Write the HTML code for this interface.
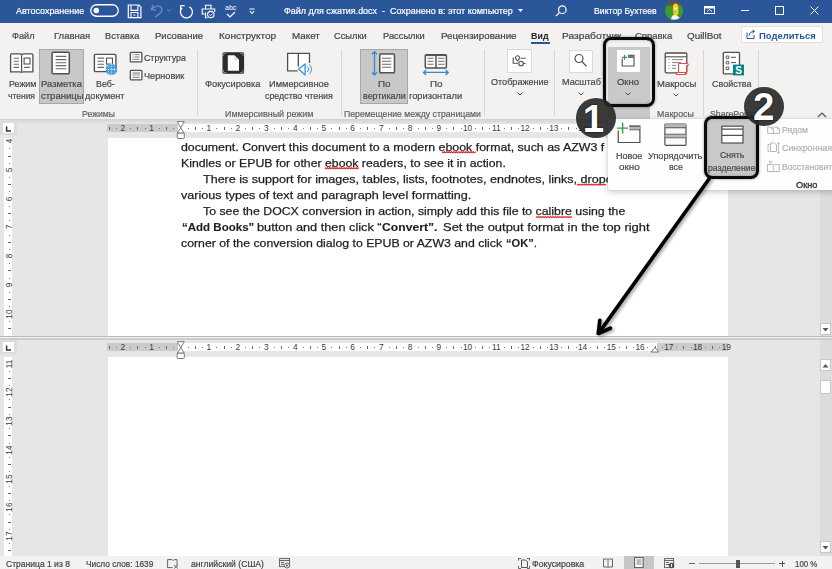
<!DOCTYPE html>
<html><head><meta charset="utf-8"><style>
html,body{margin:0;padding:0;width:832px;height:569px;overflow:hidden;background:#e6e6e6}
body{position:relative;font-family:"Liberation Sans",sans-serif}
.t{position:absolute;white-space:nowrap;transform-origin:0 50%}
.r{position:absolute}
b{font-weight:bold}
</style></head><body>
<div class="r" style="left:0px;top:0px;width:832px;height:23px;background:#2b579a"></div>
<div class="t" style="left:16.0px;top:3.9px;font-size:9.60px;line-height:14px;color:#fff;-webkit-text-stroke:0.2px #fff;transform:scaleX(0.932);">Автосохранение</div>
<svg class="r" style="left:90px;top:4px;" width="29" height="13" viewBox="0 0 29 13"><rect x="0.75" y="0.75" width="27.5" height="11.5" rx="5.75" fill="none" stroke="#fff" stroke-width="1.3"/><circle cx="6.3" cy="6.5" r="2.8" fill="#fff"/></svg>
<svg class="r" style="left:127px;top:4px;" width="15" height="15" viewBox="0 0 15 15"><path d="M1.3 1H12L13.9 2.9V13.6H1.3Z" stroke="#fff" stroke-width="1.2" fill="none"/><path d="M4 1V6.4H10.9V1M4 13.6V8.5H10.9V13.6" stroke="#fff" stroke-width="1.1" fill="none"/><path d="M6.3 11h2.2" stroke="#fff" stroke-width="1"/></svg>
<svg class="r" style="left:149px;top:3px;" width="25" height="16" viewBox="0 0 25 16"><path d="M6 14C12.5 10.5 14.5 6.5 12 4.2S5 3.5 2.6 6.4" stroke="#6f8fc4" stroke-width="1.2" fill="none"/><path d="M4.3 1.8L2.3 6.6L7.2 7.3" stroke="#6f8fc4" stroke-width="1.2" fill="none"/><path d="M18 6.2l2.2 2.1 2.2-2.1" stroke="#6f8fc4" stroke-width="1" fill="none"/></svg>
<svg class="r" style="left:178px;top:3px;" width="17" height="17" viewBox="0 0 17 17"><path d="M11.4 3.7A6 6 0 1 1 4.2 4.7" stroke="#fff" stroke-width="1.25" fill="none"/><path d="M2.6 2.6H6.6M2.6 2.6V6.4" stroke="#fff" stroke-width="1.2" fill="none"/></svg>
<svg class="r" style="left:201px;top:4px;" width="15" height="15" viewBox="0 0 15 15"><path d="M4.5 5V1.3H10V5" stroke="#fff" stroke-width="1.1" fill="none"/><path d="M4.5 10H1.2V5H13.7V8" stroke="#fff" stroke-width="1.1" fill="none"/><path d="M4.5 8.5V13.8H6.5" stroke="#fff" stroke-width="1.1" fill="none"/><circle cx="9.8" cy="10.6" r="3.2" fill="#2b579a" stroke="#fff" stroke-width="1.1"/><path d="M8.3 10.7l1.1 1 1.9-2" stroke="#fff" stroke-width="0.9" fill="none"/></svg>
<div class="t" style="left:225px;top:4px;font-size:7px;line-height:8px;color:#fff">abc</div>
<svg class="r" style="left:226px;top:11px;" width="10" height="7" viewBox="0 0 10 7"><path d="M1 3l3 3 5-5" fill="none" stroke="#fff" stroke-width="1.2"/></svg>
<svg class="r" style="left:249px;top:8px;" width="6" height="7" viewBox="0 0 6 7"><path d="M0.5 1h5M0.8 3l2.2 2.5 2.2-2.5" fill="none" stroke="#fff" stroke-width="1.1"/></svg>
<div class="t" style="left:284.0px;top:4.1px;font-size:9.60px;line-height:14px;color:#fff;-webkit-text-stroke:0.2px #fff;transform:scaleX(0.934);">Файл для сжатия.docx&nbsp; -&nbsp; Сохранено в: этот компьютер</div>
<svg class="r" style="left:518px;top:9px;" width="5" height="4" viewBox="0 0 5 4"><path d="M0 0h5L2.5 3z" fill="#fff"/></svg>
<svg class="r" style="left:555px;top:5px;" width="12" height="12" viewBox="0 0 12 12"><circle cx="7.3" cy="4.7" r="3.8" fill="none" stroke="#fff" stroke-width="1.2"/><path d="M4.6 7.4L1 11" stroke="#fff" stroke-width="1.3"/></svg>
<div class="t" style="left:593.5px;top:4.4px;font-size:9.60px;line-height:14px;color:#fff;-webkit-text-stroke:0.2px #fff;transform:scaleX(0.905);">Виктор Бухтеев</div>
<svg class="r" style="left:664px;top:1px;" width="20" height="20" viewBox="0 0 20 20"><defs><clipPath id="av"><circle cx="10" cy="9.7" r="9.1"/></clipPath></defs><g clip-path="url(#av)"><rect x="0" y="0" width="20" height="20" fill="#3d9a2c"/><rect x="0" y="0" width="20" height="4.5" fill="#7a4a22"/><path d="M7 20c0-3.5 1-6 3.6-6.2S15.5 16 16 20z" fill="#f2f2f2"/><path d="M9 5.5c0-2 1.2-3 2.6-3s2.8 1 2.8 3v6.5c0 1.5-1 2.5-2.6 2.5s-2.8-1.4-2.8-3z" fill="#f2cf2e"/><circle cx="11.7" cy="7.4" r="1.1" fill="#fff"/><path d="M8.5 9.5c0.8 1.2 2 1.8 3.2 1.5" stroke="#b08a2a" stroke-width="0.8" fill="none"/><path d="M14.5 17l2-1.5 1 2.5-2 1z" fill="#f2cf2e"/></g></svg>
<svg class="r" style="left:704px;top:6px;" width="11" height="8" viewBox="0 0 11 8"><rect x="0.5" y="0.5" width="10" height="7" fill="none" stroke="#fff" stroke-width="1"/><rect x="0.5" y="0.5" width="10" height="2" fill="#fff"/><path d="M3 5.5l2.5-2 2.5 2" fill="none" stroke="#fff" stroke-width="0.9"/></svg>
<div class="r" style="left:741px;top:9.5px;width:7.5px;height:1px;background:#fff"></div>
<svg class="r" style="left:775px;top:6px;" width="9" height="9" viewBox="0 0 9 9"><rect x="0.5" y="0.5" width="8" height="8" fill="none" stroke="#fff" stroke-width="1"/></svg>
<svg class="r" style="left:810px;top:6px;" width="9" height="9" viewBox="0 0 9 9"><path d="M0.5 0.5l8 8M8.5 0.5l-8 8" stroke="#fff" stroke-width="1"/></svg>
<div class="r" style="left:0px;top:23px;width:832px;height:96px;background:#f3f2f1"></div>
<div class="t" style="left:11.8px;top:28.9px;font-size:9.60px;line-height:14px;color:#444;-webkit-text-stroke:0.2px #444;transform:scaleX(0.953);">Файл</div>
<div class="t" style="left:53.9px;top:28.9px;font-size:9.60px;line-height:14px;color:#444;-webkit-text-stroke:0.2px #444;transform:scaleX(0.993);">Главная</div>
<div class="t" style="left:105.4px;top:28.9px;font-size:9.60px;line-height:14px;color:#444;-webkit-text-stroke:0.2px #444;transform:scaleX(0.961);">Вставка</div>
<div class="t" style="left:154.9px;top:28.9px;font-size:9.60px;line-height:14px;color:#444;-webkit-text-stroke:0.2px #444;transform:scaleX(0.995);">Рисование</div>
<div class="t" style="left:218.9px;top:28.9px;font-size:9.60px;line-height:14px;color:#444;-webkit-text-stroke:0.2px #444;transform:scaleX(1.043);">Конструктор</div>
<div class="t" style="left:291.6px;top:28.9px;font-size:9.60px;line-height:14px;color:#444;-webkit-text-stroke:0.2px #444;transform:scaleX(1.027);">Макет</div>
<div class="t" style="left:333.8px;top:28.9px;font-size:9.60px;line-height:14px;color:#444;-webkit-text-stroke:0.2px #444;transform:scaleX(0.968);">Ссылки</div>
<div class="t" style="left:383.3px;top:28.9px;font-size:9.60px;line-height:14px;color:#444;-webkit-text-stroke:0.2px #444;transform:scaleX(0.970);">Рассылки</div>
<div class="t" style="left:440.8px;top:28.9px;font-size:9.60px;line-height:14px;color:#444;-webkit-text-stroke:0.2px #444;transform:scaleX(1.020);">Рецензирование</div>
<div class="t" style="left:561.9px;top:28.9px;font-size:9.60px;line-height:14px;color:#444;-webkit-text-stroke:0.2px #444;transform:scaleX(1.065);">Разработчик</div>
<div class="t" style="left:634.7px;top:28.9px;font-size:9.60px;line-height:14px;color:#444;-webkit-text-stroke:0.2px #444;transform:scaleX(0.990);">Справка</div>
<div class="t" style="left:687.3px;top:28.9px;font-size:9.60px;line-height:14px;color:#444;-webkit-text-stroke:0.2px #444;transform:scaleX(1.029);">QuillBot</div>
<div class="t" style="left:531.4px;top:28.9px;font-size:9.60px;line-height:14px;color:#262626;font-weight:bold;transform:scaleX(0.930);">Вид</div>
<div class="r" style="left:531px;top:42px;width:19px;height:2px;background:#2b579a"></div>
<div class="r" style="left:741px;top:26px;width:82px;height:17px;background:#fff;border:1px solid #e1dfdd;box-sizing:border-box;border-radius:2px"></div>
<svg class="r" style="left:746px;top:29px;" width="9" height="10" viewBox="0 0 9 10"><path d="M1 3.5v6h7V6" fill="none" stroke="#2b579a" stroke-width="1"/><path d="M3 7c0-3 2-4.5 5-4.5M6.5 0.8l2 1.7-2 1.7" fill="none" stroke="#2b579a" stroke-width="1"/></svg>
<div class="t" style="left:758.5px;top:28.6px;font-size:9.60px;line-height:14px;color:#2b579a;font-weight:bold;transform:scaleX(0.988);">Поделиться</div>
<div class="r" style="left:0px;top:119px;width:832px;height:1px;background:#d2d2d2"></div>
<div class="r" style="left:197px;top:50px;width:1px;height:66px;background:#d6d6d6"></div>
<div class="r" style="left:341px;top:50px;width:1px;height:66px;background:#d6d6d6"></div>
<div class="r" style="left:484px;top:50px;width:1px;height:66px;background:#d6d6d6"></div>
<div class="r" style="left:554px;top:50px;width:1px;height:66px;background:#d6d6d6"></div>
<div class="r" style="left:648px;top:50px;width:1px;height:66px;background:#d6d6d6"></div>
<div class="r" style="left:703px;top:50px;width:1px;height:66px;background:#d6d6d6"></div>
<div class="r" style="left:758px;top:50px;width:1px;height:66px;background:#d6d6d6"></div>
<div class="r" style="left:39px;top:49px;width:45px;height:55px;background:#cac8c6;border:1px solid #a9a7a5;box-sizing:border-box"></div>
<div class="r" style="left:360px;top:49px;width:48px;height:55px;background:#cac8c6;border:1px solid #a9a7a5;box-sizing:border-box"></div>
<svg class="r" style="left:9px;top:52px;" width="26" height="22" viewBox="0 0 26 22"><path d="M1.6 2.9Q1.6 1.9 2.6 1.9H10.5Q12.6 1.9 12.6 3.5Q12.6 1.9 14.7 1.9H22.9Q23.9 1.9 23.9 2.9V19.8H14.5Q12.6 19.8 12.6 20.8Q12.6 19.8 10.7 19.8H1.6Z" fill="#fff" stroke="#505050" stroke-width="1.3"/><path d="M12.6 3.5V20.3" stroke="#505050" stroke-width="1.2"/><path d="M4.6 6.3h5.4M4.6 9.2h5.4M4.6 12.3h5.4M4.6 15.4h5.4M15.1 15.4h5.9" stroke="#6a6a6a" stroke-width="1.1"/><rect x="15.1" y="6.1" width="5.9" height="5.9" fill="none" stroke="#505050" stroke-width="1.1"/></svg>
<div class="t" style="left:8.5px;top:77.1px;font-size:9.60px;line-height:14px;color:#474747;-webkit-text-stroke:0.2px #474747;transform:scaleX(0.929);">Режим</div>
<div class="t" style="left:8.0px;top:89.1px;font-size:9.60px;line-height:14px;color:#474747;-webkit-text-stroke:0.2px #474747;transform:scaleX(0.885);">чтения</div>
<svg class="r" style="left:50px;top:51px;" width="22" height="24" viewBox="0 0 22 24"><rect x="2.1" y="1.2" width="17.2" height="21.5" rx="1" fill="#fff" stroke="#505050" stroke-width="1.5"/><path d="M5.6 5.4h10.6M5.6 8.6h10.6M5.6 11.7h10.6M5.6 14.6h10.6M5.6 17.8h10.6" stroke="#6a6a6a" stroke-width="1.1"/></svg>
<div class="t" style="left:41.0px;top:77.1px;font-size:9.60px;line-height:14px;color:#474747;-webkit-text-stroke:0.2px #474747;transform:scaleX(0.988);">Разметка</div>
<div class="t" style="left:40.5px;top:89.1px;font-size:9.60px;line-height:14px;color:#474747;-webkit-text-stroke:0.2px #474747;transform:scaleX(0.990);">страницы</div>
<svg class="r" style="left:93px;top:53px;" width="25" height="24" viewBox="0 0 25 24"><rect x="1.4" y="1.4" width="21.5" height="17.2" rx="1" fill="#fff" stroke="#505050" stroke-width="1.4"/><path d="M4.4 5.1h6.7M4.4 8.2h6.7M4.4 11.2h6.7M4.4 14.4h6.7" stroke="#6a6a6a" stroke-width="1.1"/><rect x="13.5" y="5.1" width="6" height="6" fill="none" stroke="#505050" stroke-width="1.1"/><circle cx="18.4" cy="16.5" r="5.8" fill="#3a96dd"/><path d="M12.6 16.5h11.6M18.4 10.7v11.6" stroke="#fff" stroke-width="0.8" stroke-dasharray="1.2 1"/><ellipse cx="18.4" cy="16.5" rx="3" ry="5.8" fill="none" stroke="#fff" stroke-width="0.7" stroke-dasharray="1.2 1"/></svg>
<div class="t" style="left:96.3px;top:77.1px;font-size:9.60px;line-height:14px;color:#474747;-webkit-text-stroke:0.2px #474747;transform:scaleX(0.920);">Веб-</div>
<div class="t" style="left:85.2px;top:89.1px;font-size:9.60px;line-height:14px;color:#474747;-webkit-text-stroke:0.2px #474747;transform:scaleX(0.950);">документ</div>
<svg class="r" style="left:128.5px;top:51px;" width="14" height="12" viewBox="0 0 14 12"><rect x="1.3" y="1.3" width="11.6" height="9.6" rx="1" fill="#fff" stroke="#505050" stroke-width="1.3"/><path d="M3.5 3.7h1M5.5 3.7h5M3.5 6h1M5.5 6h5M3.5 8.3h7" stroke="#6a6a6a" stroke-width="0.9"/></svg>
<div class="t" style="left:144.3px;top:50.9px;font-size:9.60px;line-height:14px;color:#474747;-webkit-text-stroke:0.2px #474747;transform:scaleX(0.920);">Структура</div>
<svg class="r" style="left:128.5px;top:68.5px;" width="14" height="12" viewBox="0 0 14 12"><rect x="1.3" y="1.3" width="11.6" height="9.6" rx="1" fill="#fff" stroke="#505050" stroke-width="1.3"/><rect x="3.3" y="3" width="7.6" height="3.6" fill="#bbb"/><path d="M3.3 8.3h7.6" stroke="#6a6a6a" stroke-width="0.9"/></svg>
<div class="t" style="left:144.3px;top:68.7px;font-size:9.60px;line-height:14px;color:#474747;-webkit-text-stroke:0.2px #474747;transform:scaleX(0.953);">Черновик</div>
<div class="t" style="left:82.0px;top:107.3px;font-size:9.60px;line-height:14px;color:#605e5c;-webkit-text-stroke:0.2px #605e5c;transform:scaleX(0.904);">Режимы</div>
<svg class="r" style="left:222px;top:52px;" width="23" height="23" viewBox="0 0 23 23"><rect x="0.5" y="0.2" width="21.6" height="21.6" rx="1.5" fill="#2b2b2b"/><path d="M5.8 3.3H12.4L17 7.8V18.8H5.8Z" fill="#fafafa"/><path d="M12.4 3.3V7.8H17Z" fill="#d8d8d8"/><path d="M1.6 4.2V1.4H4.4M18.2 1.4H21V4.2M1.6 17.8V20.6H4.4M18.2 20.6H21V17.8" stroke="#a0a0a0" stroke-width="0.8" fill="none"/></svg>
<div class="t" style="left:205.4px;top:77.1px;font-size:9.60px;line-height:14px;color:#474747;-webkit-text-stroke:0.2px #474747;transform:scaleX(0.965);">Фокусировка</div>
<svg class="r" style="left:286px;top:52px;" width="26" height="25" viewBox="0 0 26 25"><path d="M1.6 1.3H23.5V10.9H19.5V14.5H12.3V18.8H1.6Z" fill="#fff"/><path d="M23.5 10.9V1.3H12.3V14.5M12.3 1.3H1.6V18.8H11.6" fill="none" stroke="#505050" stroke-width="1.3"/><path d="M12.6 17.1L19.1 12V23L12.6 17.1Z" fill="#fff" stroke="#3a96dd" stroke-width="1.3" stroke-linejoin="round"/><path d="M21.2 14.4a3.6 3.6 0 0 1 0 5.6M23.3 12.4a6.4 6.4 0 0 1 0 9.6" fill="none" stroke="#3a96dd" stroke-width="1"/></svg>
<div class="t" style="left:269.4px;top:77.1px;font-size:9.60px;line-height:14px;color:#474747;-webkit-text-stroke:0.2px #474747;transform:scaleX(0.966);">Иммерсивное</div>
<div class="t" style="left:265.0px;top:89.1px;font-size:9.60px;line-height:14px;color:#474747;-webkit-text-stroke:0.2px #474747;transform:scaleX(0.923);">средство чтения</div>
<div class="t" style="left:224.6px;top:107.3px;font-size:9.60px;line-height:14px;color:#605e5c;-webkit-text-stroke:0.2px #605e5c;transform:scaleX(0.929);">Иммерсивный режим</div>
<svg class="r" style="left:371px;top:50px;" width="26" height="27" viewBox="0 0 26 27"><path d="M3.5 1.8V24.8M1 4.3L3.5 1.6 6 4.3M1 22.3L3.5 25 6 22.3" fill="none" stroke="#2f8ad8" stroke-width="1.3"/><rect x="8.75" y="4" width="14.7" height="18.7" rx="0.8" fill="#fff" stroke="#505050" stroke-width="1.5"/><path d="M11 8.2h9.3M11 11.2h9.3M11 14.3h9.3M11 17.3h9.3" stroke="#6a6a6a" stroke-width="1.1"/></svg>
<div class="t" style="left:377.9px;top:77.1px;font-size:9.60px;line-height:14px;color:#474747;-webkit-text-stroke:0.2px #474747;transform:scaleX(1.029);">По</div>
<div class="t" style="left:362.5px;top:89.1px;font-size:9.60px;line-height:14px;color:#474747;-webkit-text-stroke:0.2px #474747;transform:scaleX(0.932);">вертикали</div>
<svg class="r" style="left:422px;top:53px;" width="28" height="23" viewBox="0 0 28 23"><rect x="3.3" y="1.7" width="21.1" height="13.3" rx="1" fill="#fff" stroke="#505050" stroke-width="1.5"/><path d="M3.3 2.6h21.1" stroke="#505050" stroke-width="1"/><path d="M14 1.7V15" stroke="#505050" stroke-width="1.5"/><path d="M5.5 5.2h6M5.5 8.2h6M5.5 11.3h6M16 5.2h6.5M16 8.2h6.5M16 11.3h6.5" stroke="#6a6a6a" stroke-width="1.1"/><path d="M1.7 19.4H26.1M4.2 16.9L1.5 19.4 4.2 21.9M23.6 16.9L26.3 19.4 23.6 21.9" fill="none" stroke="#2f8ad8" stroke-width="1.3"/></svg>
<div class="t" style="left:429.6px;top:77.1px;font-size:9.60px;line-height:14px;color:#474747;-webkit-text-stroke:0.2px #474747;transform:scaleX(1.029);">По</div>
<div class="t" style="left:409.4px;top:89.1px;font-size:9.60px;line-height:14px;color:#474747;-webkit-text-stroke:0.2px #474747;transform:scaleX(0.970);">горизонтали</div>
<div class="t" style="left:344.0px;top:107.3px;font-size:9.60px;line-height:14px;color:#605e5c;-webkit-text-stroke:0.2px #605e5c;transform:scaleX(0.905);">Перемещение между страницами</div>
<div class="r" style="left:507px;top:49px;width:25px;height:24px;background:#fff;border:1px solid #d9d9d9;box-sizing:border-box"></div>
<svg class="r" style="left:512px;top:55px;" width="15" height="12" viewBox="0 0 15 12"><path d="M1.2 2.5V8.3H6" fill="none" stroke="#505050" stroke-width="1.1"/><path d="M5.5 0.8a2 2 0 0 1 2 2c0 1.5-2 3-2 3s-2-1.5-2-3a2 2 0 0 1 2-2z" fill="none" stroke="#505050" stroke-width="1.1"/><path d="M8.5 3.3H13.6M11.4 8.5H13.6" stroke="#505050" stroke-width="1.1"/><circle cx="9" cy="8.5" r="2.3" fill="none" stroke="#505050" stroke-width="1.1"/></svg>
<div class="t" style="left:490.8px;top:75.4px;font-size:9.60px;line-height:14px;color:#474747;-webkit-text-stroke:0.2px #474747;transform:scaleX(0.945);">Отображение</div>
<svg class="r" style="left:516.5px;top:92px;" width="6" height="4" viewBox="0 0 6 4"><path d="M0.5 0.5l2.5 2.5 2.5-2.5" fill="none" stroke="#505050" stroke-width="1"/></svg>
<div class="r" style="left:569px;top:49.5px;width:24px;height:23px;background:#fff;border:1px solid #d9d9d9;box-sizing:border-box"></div>
<svg class="r" style="left:573px;top:53px;" width="15" height="15" viewBox="0 0 15 15"><circle cx="6" cy="5.5" r="4" fill="none" stroke="#505050" stroke-width="1.2"/><path d="M8.9 8.5L13.5 13.4" stroke="#505050" stroke-width="1.3"/></svg>
<div class="t" style="left:561.5px;top:75.3px;font-size:9.60px;line-height:14px;color:#474747;-webkit-text-stroke:0.2px #474747;transform:scaleX(0.947);">Масштаб</div>
<svg class="r" style="left:578px;top:92px;" width="6" height="4" viewBox="0 0 6 4"><path d="M0.5 0.5l2.5 2.5 2.5-2.5" fill="none" stroke="#505050" stroke-width="1"/></svg>
<div class="r" style="left:607.5px;top:47px;width:42px;height:72px;background:#c9c9c9"></div>
<div class="r" style="left:617px;top:50px;width:22.5px;height:22px;background:#fff"></div>
<svg class="r" style="left:621px;top:54px;" width="14" height="13" viewBox="0 0 14 13"><path d="M1.2 4.5V12H13V1.4H7" fill="none" stroke="#505050" stroke-width="1.1"/><rect x="7" y="1.4" width="6" height="2.6" fill="#777"/><path d="M3.6 0.8v5M1.1 3.3h5" stroke="#2ea043" stroke-width="1.2"/></svg>
<div class="t" style="left:617.0px;top:74.9px;font-size:9.60px;line-height:14px;color:#474747;-webkit-text-stroke:0.2px #474747;transform:scaleX(0.986);">Окно</div>
<svg class="r" style="left:625px;top:92px;" width="6" height="4" viewBox="0 0 6 4"><path d="M0.5 0.5l2.5 2.5 2.5-2.5" fill="none" stroke="#505050" stroke-width="1"/></svg>
<svg class="r" style="left:664px;top:52px;" width="26" height="24" viewBox="0 0 26 24"><rect x="1.2" y="1" width="21.6" height="19.8" rx="1" fill="#fff" stroke="#505050" stroke-width="1.3"/><path d="M1.2 4.8h21.6" stroke="#505050" stroke-width="1.1"/><path d="M4.5 7.7h1M8 7.7h11M4.5 10.6h1M8 10.6h9M4.5 13.4h1M8 13.4h4M4.5 16.3h1M8 16.3h4" stroke="#777" stroke-width="0.9"/><path d="M14.5 11.5h8.5a1.2 1.2 0 0 1 0 2.4h-0.5V21.5H14.5" fill="#fff" stroke="#e8474c" stroke-width="1.1"/><path d="M12.5 22.5H21.5V20.5H12.5Z" fill="#fff" stroke="#e8474c" stroke-width="1.1"/><path d="M14.5 11.5V20.5" stroke="#e8474c" stroke-width="1.1"/></svg>
<div class="t" style="left:656.6px;top:76.6px;font-size:9.60px;line-height:14px;color:#474747;-webkit-text-stroke:0.2px #474747;transform:scaleX(0.984);">Макросы</div>
<svg class="r" style="left:672.5px;top:93px;" width="6" height="4" viewBox="0 0 6 4"><path d="M0.5 0.5l2.5 2.5 2.5-2.5" fill="none" stroke="#505050" stroke-width="1"/></svg>
<div class="t" style="left:657.3px;top:107.3px;font-size:9.60px;line-height:14px;color:#605e5c;-webkit-text-stroke:0.2px #605e5c;transform:scaleX(0.922);">Макросы</div>
<svg class="r" style="left:722px;top:51px;" width="23" height="25" viewBox="0 0 23 25"><rect x="1.3" y="1.3" width="16.2" height="21.6" rx="1" fill="#fff" stroke="#505050" stroke-width="1.3"/><path d="M4.2 5h2.6v2.6H4.2zM4.2 10.3h2.6v2.6H4.2zM4.2 16h2.6v2.6H4.2z" fill="none" stroke="#505050" stroke-width="0.9"/><path d="M9 6.3h5M9 11.6h5" stroke="#505050" stroke-width="1"/><rect x="11" y="13.6" width="11" height="10.8" fill="#038387"/><text x="16.5" y="22.5" font-size="10" font-weight="bold" fill="#fff" text-anchor="middle" font-family="Liberation Sans">S</text></svg>
<div class="t" style="left:711.5px;top:76.6px;font-size:9.60px;line-height:14px;color:#474747;-webkit-text-stroke:0.2px #474747;transform:scaleX(0.937);">Свойства</div>
<div class="t" style="left:709.7px;top:107.3px;font-size:9.60px;line-height:14px;color:#605e5c;-webkit-text-stroke:0.2px #605e5c;transform:scaleX(0.912);">SharePoint</div>
<svg class="r" style="left:817px;top:112px;" width="10" height="6" viewBox="0 0 10 6"><path d="M1 5l4-4 4 4" fill="none" stroke="#505050" stroke-width="1.1"/></svg>
<div class="r" style="left:0px;top:120px;width:832px;height:436px;background:#e6e6e6"></div>
<div class="r" style="left:0px;top:120px;width:832px;height:4px;background:linear-gradient(rgba(0,0,0,0.07),rgba(0,0,0,0))"></div>
<div class="r" style="left:0px;top:120px;width:17px;height:15px;background:#dcdcdc"></div>
<div class="r" style="left:3px;top:123px;width:11px;height:10px;background:#fff"></div>
<svg class="r" style="left:4px;top:124px;" width="8" height="8" viewBox="0 0 8 8"><path d="M2.6 2.6V6.9H7" fill="none" stroke="#333" stroke-width="1.5"/></svg>
<div class="r" style="left:107px;top:124px;width:621px;height:7.5px;background:#fff"></div>
<div class="r" style="left:107px;top:124px;width:71px;height:7.5px;background:#cbcbcb"></div>
<div class="r" style="left:657px;top:124px;width:71px;height:7.5px;background:#cbcbcb"></div>
<div class="r" style="left:108.5px;top:126.5px;width:1px;height:3px;background:#666"></div>
<div class="r" style="left:115.5px;top:127.5px;width:1px;height:1px;background:#777"></div>
<div class="t" style="left:116.7px;top:124px;width:12px;text-align:center;font-size:8.3px;line-height:8px;color:#3a3a3a">2</div>
<div class="r" style="left:130.0px;top:127.5px;width:1px;height:1px;background:#777"></div>
<div class="r" style="left:137.0px;top:126.5px;width:1px;height:3px;background:#666"></div>
<div class="r" style="left:144.5px;top:127.5px;width:1px;height:1px;background:#777"></div>
<div class="t" style="left:145.5px;top:124px;width:12px;text-align:center;font-size:8.3px;line-height:8px;color:#3a3a3a">1</div>
<div class="r" style="left:158.5px;top:127.5px;width:1px;height:1px;background:#777"></div>
<div class="r" style="left:166.0px;top:126.5px;width:1px;height:3px;background:#666"></div>
<div class="r" style="left:173.0px;top:127.5px;width:1px;height:1px;background:#777"></div>
<div class="r" style="left:187.5px;top:127.5px;width:1px;height:1px;background:#777"></div>
<div class="r" style="left:194.5px;top:126.5px;width:1px;height:3px;background:#666"></div>
<div class="r" style="left:202.0px;top:127.5px;width:1px;height:1px;background:#777"></div>
<div class="t" style="left:202.9px;top:124px;width:12px;text-align:center;font-size:8.3px;line-height:8px;color:#3a3a3a">1</div>
<div class="r" style="left:216.0px;top:127.5px;width:1px;height:1px;background:#777"></div>
<div class="r" style="left:223.5px;top:126.5px;width:1px;height:3px;background:#666"></div>
<div class="r" style="left:230.5px;top:127.5px;width:1px;height:1px;background:#777"></div>
<div class="t" style="left:231.7px;top:124px;width:12px;text-align:center;font-size:8.3px;line-height:8px;color:#3a3a3a">2</div>
<div class="r" style="left:245.0px;top:127.5px;width:1px;height:1px;background:#777"></div>
<div class="r" style="left:252.0px;top:126.5px;width:1px;height:3px;background:#666"></div>
<div class="r" style="left:259.0px;top:127.5px;width:1px;height:1px;background:#777"></div>
<div class="t" style="left:260.4px;top:124px;width:12px;text-align:center;font-size:8.3px;line-height:8px;color:#3a3a3a">3</div>
<div class="r" style="left:273.5px;top:127.5px;width:1px;height:1px;background:#777"></div>
<div class="r" style="left:281.0px;top:126.5px;width:1px;height:3px;background:#666"></div>
<div class="r" style="left:288.0px;top:127.5px;width:1px;height:1px;background:#777"></div>
<div class="t" style="left:289.2px;top:124px;width:12px;text-align:center;font-size:8.3px;line-height:8px;color:#3a3a3a">4</div>
<div class="r" style="left:302.5px;top:127.5px;width:1px;height:1px;background:#777"></div>
<div class="r" style="left:309.5px;top:126.5px;width:1px;height:3px;background:#666"></div>
<div class="r" style="left:316.5px;top:127.5px;width:1px;height:1px;background:#777"></div>
<div class="t" style="left:317.9px;top:124px;width:12px;text-align:center;font-size:8.3px;line-height:8px;color:#3a3a3a">5</div>
<div class="r" style="left:331.0px;top:127.5px;width:1px;height:1px;background:#777"></div>
<div class="r" style="left:338.5px;top:126.5px;width:1px;height:3px;background:#666"></div>
<div class="r" style="left:345.5px;top:127.5px;width:1px;height:1px;background:#777"></div>
<div class="t" style="left:346.6px;top:124px;width:12px;text-align:center;font-size:8.3px;line-height:8px;color:#3a3a3a">6</div>
<div class="r" style="left:360.0px;top:127.5px;width:1px;height:1px;background:#777"></div>
<div class="r" style="left:367.0px;top:126.5px;width:1px;height:3px;background:#666"></div>
<div class="r" style="left:374.0px;top:127.5px;width:1px;height:1px;background:#777"></div>
<div class="t" style="left:375.4px;top:124px;width:12px;text-align:center;font-size:8.3px;line-height:8px;color:#3a3a3a">7</div>
<div class="r" style="left:388.5px;top:127.5px;width:1px;height:1px;background:#777"></div>
<div class="r" style="left:396.0px;top:126.5px;width:1px;height:3px;background:#666"></div>
<div class="r" style="left:403.0px;top:127.5px;width:1px;height:1px;background:#777"></div>
<div class="t" style="left:404.1px;top:124px;width:12px;text-align:center;font-size:8.3px;line-height:8px;color:#3a3a3a">8</div>
<div class="r" style="left:417.5px;top:127.5px;width:1px;height:1px;background:#777"></div>
<div class="r" style="left:424.5px;top:126.5px;width:1px;height:3px;background:#666"></div>
<div class="r" style="left:431.5px;top:127.5px;width:1px;height:1px;background:#777"></div>
<div class="t" style="left:432.9px;top:124px;width:12px;text-align:center;font-size:8.3px;line-height:8px;color:#3a3a3a">9</div>
<div class="r" style="left:446.0px;top:127.5px;width:1px;height:1px;background:#777"></div>
<div class="r" style="left:453.0px;top:126.5px;width:1px;height:3px;background:#666"></div>
<div class="r" style="left:460.5px;top:127.5px;width:1px;height:1px;background:#777"></div>
<div class="t" style="left:461.6px;top:124px;width:12px;text-align:center;font-size:8.3px;line-height:8px;color:#3a3a3a">10</div>
<div class="r" style="left:475.0px;top:127.5px;width:1px;height:1px;background:#777"></div>
<div class="r" style="left:482.0px;top:126.5px;width:1px;height:3px;background:#666"></div>
<div class="r" style="left:489.0px;top:127.5px;width:1px;height:1px;background:#777"></div>
<div class="t" style="left:490.3px;top:124px;width:12px;text-align:center;font-size:8.3px;line-height:8px;color:#3a3a3a">11</div>
<div class="r" style="left:503.5px;top:127.5px;width:1px;height:1px;background:#777"></div>
<div class="r" style="left:510.5px;top:126.5px;width:1px;height:3px;background:#666"></div>
<div class="r" style="left:518.0px;top:127.5px;width:1px;height:1px;background:#777"></div>
<div class="t" style="left:519.1px;top:124px;width:12px;text-align:center;font-size:8.3px;line-height:8px;color:#3a3a3a">12</div>
<div class="r" style="left:532.5px;top:127.5px;width:1px;height:1px;background:#777"></div>
<div class="r" style="left:539.5px;top:126.5px;width:1px;height:3px;background:#666"></div>
<div class="r" style="left:546.5px;top:127.5px;width:1px;height:1px;background:#777"></div>
<div class="t" style="left:547.8px;top:124px;width:12px;text-align:center;font-size:8.3px;line-height:8px;color:#3a3a3a">13</div>
<div class="r" style="left:561.0px;top:127.5px;width:1px;height:1px;background:#777"></div>
<div class="r" style="left:568.0px;top:126.5px;width:1px;height:3px;background:#666"></div>
<div class="r" style="left:575.5px;top:127.5px;width:1px;height:1px;background:#777"></div>
<div class="t" style="left:576.6px;top:124px;width:12px;text-align:center;font-size:8.3px;line-height:8px;color:#3a3a3a">14</div>
<div class="r" style="left:589.5px;top:127.5px;width:1px;height:1px;background:#777"></div>
<div class="r" style="left:597.0px;top:126.5px;width:1px;height:3px;background:#666"></div>
<div class="r" style="left:604.0px;top:127.5px;width:1px;height:1px;background:#777"></div>
<div class="t" style="left:605.3px;top:124px;width:12px;text-align:center;font-size:8.3px;line-height:8px;color:#3a3a3a">15</div>
<div class="r" style="left:618.5px;top:127.5px;width:1px;height:1px;background:#777"></div>
<div class="r" style="left:625.5px;top:126.5px;width:1px;height:3px;background:#666"></div>
<div class="r" style="left:633.0px;top:127.5px;width:1px;height:1px;background:#777"></div>
<div class="t" style="left:634.0px;top:124px;width:12px;text-align:center;font-size:8.3px;line-height:8px;color:#3a3a3a">16</div>
<div class="r" style="left:647.0px;top:127.5px;width:1px;height:1px;background:#777"></div>
<div class="r" style="left:654.5px;top:126.5px;width:1px;height:3px;background:#666"></div>
<div class="r" style="left:661.5px;top:127.5px;width:1px;height:1px;background:#777"></div>
<div class="t" style="left:662.8px;top:124px;width:12px;text-align:center;font-size:8.3px;line-height:8px;color:#3a3a3a">17</div>
<div class="r" style="left:676.0px;top:127.5px;width:1px;height:1px;background:#777"></div>
<div class="r" style="left:683.0px;top:126.5px;width:1px;height:3px;background:#666"></div>
<div class="r" style="left:690.5px;top:127.5px;width:1px;height:1px;background:#777"></div>
<div class="t" style="left:691.5px;top:124px;width:12px;text-align:center;font-size:8.3px;line-height:8px;color:#3a3a3a">18</div>
<div class="r" style="left:704.5px;top:127.5px;width:1px;height:1px;background:#777"></div>
<div class="r" style="left:712.0px;top:126.5px;width:1px;height:3px;background:#666"></div>
<div class="r" style="left:719.0px;top:127.5px;width:1px;height:1px;background:#777"></div>
<div class="t" style="left:720.3px;top:124px;width:12px;text-align:center;font-size:8.3px;line-height:8px;color:#3a3a3a">19</div>
<div class="r" style="left:108px;top:138px;width:620px;height:198px;background:#fff"></div>
<div class="r" style="left:4px;top:138px;width:8px;height:198px;background:#fff"></div>
<div class="t" style="left:0.8px;top:137.2px;width:16.5px;text-align:center;font-size:8.3px;line-height:8px;color:#3a3a3a;transform:rotate(-90deg);transform-origin:50% 50%">4</div>
<div class="r" style="left:8.5px;top:148px;width:1px;height:1px;background:#777"></div>
<div class="r" style="left:7.5px;top:156px;width:3px;height:1px;background:#666"></div>
<div class="r" style="left:8.5px;top:163px;width:1px;height:1px;background:#777"></div>
<div class="t" style="left:0.8px;top:165.9px;width:16.5px;text-align:center;font-size:8.3px;line-height:8px;color:#3a3a3a;transform:rotate(-90deg);transform-origin:50% 50%">5</div>
<div class="r" style="left:8.5px;top:177px;width:1px;height:1px;background:#777"></div>
<div class="r" style="left:7.5px;top:184px;width:3px;height:1px;background:#666"></div>
<div class="r" style="left:8.5px;top:191px;width:1px;height:1px;background:#777"></div>
<div class="t" style="left:0.8px;top:194.6px;width:16.5px;text-align:center;font-size:8.3px;line-height:8px;color:#3a3a3a;transform:rotate(-90deg);transform-origin:50% 50%">6</div>
<div class="r" style="left:8.5px;top:206px;width:1px;height:1px;background:#777"></div>
<div class="r" style="left:7.5px;top:213px;width:3px;height:1px;background:#666"></div>
<div class="r" style="left:8.5px;top:220px;width:1px;height:1px;background:#777"></div>
<div class="t" style="left:0.8px;top:223.4px;width:16.5px;text-align:center;font-size:8.3px;line-height:8px;color:#3a3a3a;transform:rotate(-90deg);transform-origin:50% 50%">7</div>
<div class="r" style="left:8.5px;top:235px;width:1px;height:1px;background:#777"></div>
<div class="r" style="left:7.5px;top:242px;width:3px;height:1px;background:#666"></div>
<div class="r" style="left:8.5px;top:249px;width:1px;height:1px;background:#777"></div>
<div class="t" style="left:0.8px;top:252.1px;width:16.5px;text-align:center;font-size:8.3px;line-height:8px;color:#3a3a3a;transform:rotate(-90deg);transform-origin:50% 50%">8</div>
<div class="r" style="left:8.5px;top:263px;width:1px;height:1px;background:#777"></div>
<div class="r" style="left:7.5px;top:270px;width:3px;height:1px;background:#666"></div>
<div class="r" style="left:8.5px;top:278px;width:1px;height:1px;background:#777"></div>
<div class="t" style="left:0.8px;top:280.9px;width:16.5px;text-align:center;font-size:8.3px;line-height:8px;color:#3a3a3a;transform:rotate(-90deg);transform-origin:50% 50%">9</div>
<div class="r" style="left:8.5px;top:292px;width:1px;height:1px;background:#777"></div>
<div class="r" style="left:7.5px;top:299px;width:3px;height:1px;background:#666"></div>
<div class="r" style="left:8.5px;top:306px;width:1px;height:1px;background:#777"></div>
<div class="t" style="left:0.8px;top:309.6px;width:16.5px;text-align:center;font-size:8.3px;line-height:8px;color:#3a3a3a;transform:rotate(-90deg);transform-origin:50% 50%">10</div>
<div class="r" style="left:8.5px;top:321px;width:1px;height:1px;background:#777"></div>
<div class="r" style="left:7.5px;top:328px;width:3px;height:1px;background:#666"></div>
<div class="r" style="left:0px;top:339px;width:17px;height:15px;background:#dcdcdc"></div>
<div class="r" style="left:3px;top:342px;width:11px;height:10px;background:#fff"></div>
<svg class="r" style="left:4px;top:343px;" width="8" height="8" viewBox="0 0 8 8"><path d="M2.6 2.6V6.9H7" fill="none" stroke="#333" stroke-width="1.5"/></svg>
<div class="r" style="left:107px;top:343px;width:621px;height:7.5px;background:#fff"></div>
<div class="r" style="left:107px;top:343px;width:71px;height:7.5px;background:#cbcbcb"></div>
<div class="r" style="left:657px;top:343px;width:71px;height:7.5px;background:#cbcbcb"></div>
<div class="r" style="left:108.5px;top:345.5px;width:1px;height:3px;background:#666"></div>
<div class="r" style="left:115.5px;top:346.5px;width:1px;height:1px;background:#777"></div>
<div class="t" style="left:116.7px;top:343px;width:12px;text-align:center;font-size:8.3px;line-height:8px;color:#3a3a3a">2</div>
<div class="r" style="left:130.0px;top:346.5px;width:1px;height:1px;background:#777"></div>
<div class="r" style="left:137.0px;top:345.5px;width:1px;height:3px;background:#666"></div>
<div class="r" style="left:144.5px;top:346.5px;width:1px;height:1px;background:#777"></div>
<div class="t" style="left:145.5px;top:343px;width:12px;text-align:center;font-size:8.3px;line-height:8px;color:#3a3a3a">1</div>
<div class="r" style="left:158.5px;top:346.5px;width:1px;height:1px;background:#777"></div>
<div class="r" style="left:166.0px;top:345.5px;width:1px;height:3px;background:#666"></div>
<div class="r" style="left:173.0px;top:346.5px;width:1px;height:1px;background:#777"></div>
<div class="r" style="left:187.5px;top:346.5px;width:1px;height:1px;background:#777"></div>
<div class="r" style="left:194.5px;top:345.5px;width:1px;height:3px;background:#666"></div>
<div class="r" style="left:202.0px;top:346.5px;width:1px;height:1px;background:#777"></div>
<div class="t" style="left:202.9px;top:343px;width:12px;text-align:center;font-size:8.3px;line-height:8px;color:#3a3a3a">1</div>
<div class="r" style="left:216.0px;top:346.5px;width:1px;height:1px;background:#777"></div>
<div class="r" style="left:223.5px;top:345.5px;width:1px;height:3px;background:#666"></div>
<div class="r" style="left:230.5px;top:346.5px;width:1px;height:1px;background:#777"></div>
<div class="t" style="left:231.7px;top:343px;width:12px;text-align:center;font-size:8.3px;line-height:8px;color:#3a3a3a">2</div>
<div class="r" style="left:245.0px;top:346.5px;width:1px;height:1px;background:#777"></div>
<div class="r" style="left:252.0px;top:345.5px;width:1px;height:3px;background:#666"></div>
<div class="r" style="left:259.0px;top:346.5px;width:1px;height:1px;background:#777"></div>
<div class="t" style="left:260.4px;top:343px;width:12px;text-align:center;font-size:8.3px;line-height:8px;color:#3a3a3a">3</div>
<div class="r" style="left:273.5px;top:346.5px;width:1px;height:1px;background:#777"></div>
<div class="r" style="left:281.0px;top:345.5px;width:1px;height:3px;background:#666"></div>
<div class="r" style="left:288.0px;top:346.5px;width:1px;height:1px;background:#777"></div>
<div class="t" style="left:289.2px;top:343px;width:12px;text-align:center;font-size:8.3px;line-height:8px;color:#3a3a3a">4</div>
<div class="r" style="left:302.5px;top:346.5px;width:1px;height:1px;background:#777"></div>
<div class="r" style="left:309.5px;top:345.5px;width:1px;height:3px;background:#666"></div>
<div class="r" style="left:316.5px;top:346.5px;width:1px;height:1px;background:#777"></div>
<div class="t" style="left:317.9px;top:343px;width:12px;text-align:center;font-size:8.3px;line-height:8px;color:#3a3a3a">5</div>
<div class="r" style="left:331.0px;top:346.5px;width:1px;height:1px;background:#777"></div>
<div class="r" style="left:338.5px;top:345.5px;width:1px;height:3px;background:#666"></div>
<div class="r" style="left:345.5px;top:346.5px;width:1px;height:1px;background:#777"></div>
<div class="t" style="left:346.6px;top:343px;width:12px;text-align:center;font-size:8.3px;line-height:8px;color:#3a3a3a">6</div>
<div class="r" style="left:360.0px;top:346.5px;width:1px;height:1px;background:#777"></div>
<div class="r" style="left:367.0px;top:345.5px;width:1px;height:3px;background:#666"></div>
<div class="r" style="left:374.0px;top:346.5px;width:1px;height:1px;background:#777"></div>
<div class="t" style="left:375.4px;top:343px;width:12px;text-align:center;font-size:8.3px;line-height:8px;color:#3a3a3a">7</div>
<div class="r" style="left:388.5px;top:346.5px;width:1px;height:1px;background:#777"></div>
<div class="r" style="left:396.0px;top:345.5px;width:1px;height:3px;background:#666"></div>
<div class="r" style="left:403.0px;top:346.5px;width:1px;height:1px;background:#777"></div>
<div class="t" style="left:404.1px;top:343px;width:12px;text-align:center;font-size:8.3px;line-height:8px;color:#3a3a3a">8</div>
<div class="r" style="left:417.5px;top:346.5px;width:1px;height:1px;background:#777"></div>
<div class="r" style="left:424.5px;top:345.5px;width:1px;height:3px;background:#666"></div>
<div class="r" style="left:431.5px;top:346.5px;width:1px;height:1px;background:#777"></div>
<div class="t" style="left:432.9px;top:343px;width:12px;text-align:center;font-size:8.3px;line-height:8px;color:#3a3a3a">9</div>
<div class="r" style="left:446.0px;top:346.5px;width:1px;height:1px;background:#777"></div>
<div class="r" style="left:453.0px;top:345.5px;width:1px;height:3px;background:#666"></div>
<div class="r" style="left:460.5px;top:346.5px;width:1px;height:1px;background:#777"></div>
<div class="t" style="left:461.6px;top:343px;width:12px;text-align:center;font-size:8.3px;line-height:8px;color:#3a3a3a">10</div>
<div class="r" style="left:475.0px;top:346.5px;width:1px;height:1px;background:#777"></div>
<div class="r" style="left:482.0px;top:345.5px;width:1px;height:3px;background:#666"></div>
<div class="r" style="left:489.0px;top:346.5px;width:1px;height:1px;background:#777"></div>
<div class="t" style="left:490.3px;top:343px;width:12px;text-align:center;font-size:8.3px;line-height:8px;color:#3a3a3a">11</div>
<div class="r" style="left:503.5px;top:346.5px;width:1px;height:1px;background:#777"></div>
<div class="r" style="left:510.5px;top:345.5px;width:1px;height:3px;background:#666"></div>
<div class="r" style="left:518.0px;top:346.5px;width:1px;height:1px;background:#777"></div>
<div class="t" style="left:519.1px;top:343px;width:12px;text-align:center;font-size:8.3px;line-height:8px;color:#3a3a3a">12</div>
<div class="r" style="left:532.5px;top:346.5px;width:1px;height:1px;background:#777"></div>
<div class="r" style="left:539.5px;top:345.5px;width:1px;height:3px;background:#666"></div>
<div class="r" style="left:546.5px;top:346.5px;width:1px;height:1px;background:#777"></div>
<div class="t" style="left:547.8px;top:343px;width:12px;text-align:center;font-size:8.3px;line-height:8px;color:#3a3a3a">13</div>
<div class="r" style="left:561.0px;top:346.5px;width:1px;height:1px;background:#777"></div>
<div class="r" style="left:568.0px;top:345.5px;width:1px;height:3px;background:#666"></div>
<div class="r" style="left:575.5px;top:346.5px;width:1px;height:1px;background:#777"></div>
<div class="t" style="left:576.6px;top:343px;width:12px;text-align:center;font-size:8.3px;line-height:8px;color:#3a3a3a">14</div>
<div class="r" style="left:589.5px;top:346.5px;width:1px;height:1px;background:#777"></div>
<div class="r" style="left:597.0px;top:345.5px;width:1px;height:3px;background:#666"></div>
<div class="r" style="left:604.0px;top:346.5px;width:1px;height:1px;background:#777"></div>
<div class="t" style="left:605.3px;top:343px;width:12px;text-align:center;font-size:8.3px;line-height:8px;color:#3a3a3a">15</div>
<div class="r" style="left:618.5px;top:346.5px;width:1px;height:1px;background:#777"></div>
<div class="r" style="left:625.5px;top:345.5px;width:1px;height:3px;background:#666"></div>
<div class="r" style="left:633.0px;top:346.5px;width:1px;height:1px;background:#777"></div>
<div class="t" style="left:634.0px;top:343px;width:12px;text-align:center;font-size:8.3px;line-height:8px;color:#3a3a3a">16</div>
<div class="r" style="left:647.0px;top:346.5px;width:1px;height:1px;background:#777"></div>
<div class="r" style="left:654.5px;top:345.5px;width:1px;height:3px;background:#666"></div>
<div class="r" style="left:661.5px;top:346.5px;width:1px;height:1px;background:#777"></div>
<div class="t" style="left:662.8px;top:343px;width:12px;text-align:center;font-size:8.3px;line-height:8px;color:#3a3a3a">17</div>
<div class="r" style="left:676.0px;top:346.5px;width:1px;height:1px;background:#777"></div>
<div class="r" style="left:683.0px;top:345.5px;width:1px;height:3px;background:#666"></div>
<div class="r" style="left:690.5px;top:346.5px;width:1px;height:1px;background:#777"></div>
<div class="t" style="left:691.5px;top:343px;width:12px;text-align:center;font-size:8.3px;line-height:8px;color:#3a3a3a">18</div>
<div class="r" style="left:704.5px;top:346.5px;width:1px;height:1px;background:#777"></div>
<div class="r" style="left:712.0px;top:345.5px;width:1px;height:3px;background:#666"></div>
<div class="r" style="left:719.0px;top:346.5px;width:1px;height:1px;background:#777"></div>
<div class="t" style="left:720.3px;top:343px;width:12px;text-align:center;font-size:8.3px;line-height:8px;color:#3a3a3a">19</div>
<div class="r" style="left:108px;top:357px;width:620px;height:199px;background:#fff"></div>
<div class="r" style="left:4px;top:357px;width:8px;height:199px;background:#fff"></div>
<div class="t" style="left:0.8px;top:359.5px;width:16.5px;text-align:center;font-size:8.3px;line-height:8px;color:#3a3a3a;transform:rotate(-90deg);transform-origin:50% 50%">11</div>
<div class="r" style="left:8.5px;top:371px;width:1px;height:1px;background:#777"></div>
<div class="r" style="left:7.5px;top:378px;width:3px;height:1px;background:#666"></div>
<div class="r" style="left:8.5px;top:385px;width:1px;height:1px;background:#777"></div>
<div class="t" style="left:0.8px;top:388.3px;width:16.5px;text-align:center;font-size:8.3px;line-height:8px;color:#3a3a3a;transform:rotate(-90deg);transform-origin:50% 50%">12</div>
<div class="r" style="left:8.5px;top:399px;width:1px;height:1px;background:#777"></div>
<div class="r" style="left:7.5px;top:407px;width:3px;height:1px;background:#666"></div>
<div class="r" style="left:8.5px;top:414px;width:1px;height:1px;background:#777"></div>
<div class="t" style="left:0.8px;top:417.0px;width:16.5px;text-align:center;font-size:8.3px;line-height:8px;color:#3a3a3a;transform:rotate(-90deg);transform-origin:50% 50%">13</div>
<div class="r" style="left:8.5px;top:428px;width:1px;height:1px;background:#777"></div>
<div class="r" style="left:7.5px;top:435px;width:3px;height:1px;background:#666"></div>
<div class="r" style="left:8.5px;top:443px;width:1px;height:1px;background:#777"></div>
<div class="t" style="left:0.8px;top:445.8px;width:16.5px;text-align:center;font-size:8.3px;line-height:8px;color:#3a3a3a;transform:rotate(-90deg);transform-origin:50% 50%">14</div>
<div class="r" style="left:8.5px;top:457px;width:1px;height:1px;background:#777"></div>
<div class="r" style="left:7.5px;top:464px;width:3px;height:1px;background:#666"></div>
<div class="r" style="left:8.5px;top:471px;width:1px;height:1px;background:#777"></div>
<div class="t" style="left:0.8px;top:474.5px;width:16.5px;text-align:center;font-size:8.3px;line-height:8px;color:#3a3a3a;transform:rotate(-90deg);transform-origin:50% 50%">15</div>
<div class="r" style="left:8.5px;top:486px;width:1px;height:1px;background:#777"></div>
<div class="r" style="left:7.5px;top:493px;width:3px;height:1px;background:#666"></div>
<div class="r" style="left:8.5px;top:500px;width:1px;height:1px;background:#777"></div>
<div class="t" style="left:0.8px;top:503.2px;width:16.5px;text-align:center;font-size:8.3px;line-height:8px;color:#3a3a3a;transform:rotate(-90deg);transform-origin:50% 50%">16</div>
<div class="r" style="left:8.5px;top:514px;width:1px;height:1px;background:#777"></div>
<div class="r" style="left:7.5px;top:522px;width:3px;height:1px;background:#666"></div>
<div class="r" style="left:8.5px;top:529px;width:1px;height:1px;background:#777"></div>
<div class="t" style="left:0.8px;top:532.0px;width:16.5px;text-align:center;font-size:8.3px;line-height:8px;color:#3a3a3a;transform:rotate(-90deg);transform-origin:50% 50%">17</div>
<div class="r" style="left:8.5px;top:543px;width:1px;height:1px;background:#777"></div>
<div class="r" style="left:7.5px;top:550px;width:3px;height:1px;background:#666"></div>
<svg class="r" style="left:176px;top:121px;" width="10" height="19" viewBox="0 0 10 19"><g fill="#fff" stroke="#7a7a7a" stroke-width="1" stroke-linejoin="round"><path d="M1.2 0.6H8.3L4.75 6.9Z"/><path d="M4.75 6.9L8.3 12.2H1.2Z"/><rect x="1.2" y="12.2" width="7.1" height="5.3" rx="0.8"/></g></svg>
<svg class="r" style="left:176px;top:340.5px;" width="10" height="19" viewBox="0 0 10 19"><g fill="#fff" stroke="#7a7a7a" stroke-width="1" stroke-linejoin="round"><path d="M1.2 0.6H8.3L4.75 6.9Z"/><path d="M4.75 6.9L8.3 12.2H1.2Z"/><rect x="1.2" y="12.2" width="7.1" height="5.3" rx="0.8"/></g></svg>
<svg class="r" style="left:650px;top:346px;" width="10" height="7" viewBox="0 0 10 7"><path d="M1 6h8L5 1.5z" fill="#fff" stroke="#666" stroke-width="0.9"/></svg>
<div class="r" style="left:0px;top:336px;width:832px;height:1px;background:#b9b9b9"></div>
<div class="r" style="left:0px;top:337px;width:832px;height:1px;background:#f4f4f4"></div>
<div class="r" style="left:0px;top:338px;width:832px;height:2px;background:#cdcdcd"></div>
<div class="r" style="left:820px;top:120px;width:12px;height:216px;background:#dcdcdc"></div>
<div class="r" style="left:820px;top:340px;width:12px;height:216px;background:#dcdcdc"></div>
<div class="r" style="left:820px;top:323px;width:11px;height:12px;background:#fff;border:1px solid #c6c6c6;box-sizing:border-box"></div>
<svg class="r" style="left:821px;top:327px;" width="9" height="5" viewBox="0 0 9 5"><path d="M1.5 1l3 3.5 3-3.5z" fill="#555"/></svg>
<div class="r" style="left:820px;top:359px;width:11px;height:12px;background:#fff;border:1px solid #c6c6c6;box-sizing:border-box"></div>
<svg class="r" style="left:821px;top:363px;" width="9" height="5" viewBox="0 0 9 5"><path d="M1.5 4.5l3-3.5 3 3.5z" fill="#555"/></svg>
<div class="r" style="left:820px;top:380px;width:11px;height:14px;background:#fff;border:1px solid #c6c6c6;box-sizing:border-box"></div>
<div class="r" style="left:820px;top:541px;width:11px;height:12px;background:#fff;border:1px solid #c6c6c6;box-sizing:border-box"></div>
<svg class="r" style="left:821px;top:545px;" width="9" height="5" viewBox="0 0 9 5"><path d="M1.5 1l3 3.5 3-3.5z" fill="#555"/></svg>
<div class="t" style="left:181.4px;top:139.0px;font-size:11.6px;line-height:15.0px;color:#1e1e1e;-webkit-text-stroke:0.25px #1e1e1e;transform:scaleX(1.066)">document. Convert this document to a modern ebook format, such as AZW3 f</div>
<div class="t" style="left:181.4px;top:155.1px;font-size:11.6px;line-height:15.0px;color:#1e1e1e;-webkit-text-stroke:0.25px #1e1e1e;transform:scaleX(1.059)">Kindles or EPUB for other ebook readers, to see it in action.</div>
<div class="t" style="left:203px;top:171.1px;font-size:11.6px;line-height:15.0px;color:#1e1e1e;-webkit-text-stroke:0.25px #1e1e1e;transform:scaleX(1.081)">There is support for images, tables, lists, footnotes, endnotes, links, dropc</div>
<div class="t" style="left:181.4px;top:187.2px;font-size:11.6px;line-height:15.0px;color:#1e1e1e;-webkit-text-stroke:0.25px #1e1e1e;transform:scaleX(1.088)">various types of text and paragraph level formatting.</div>
<div class="t" style="left:203px;top:203.3px;font-size:11.6px;line-height:15.0px;color:#1e1e1e;-webkit-text-stroke:0.25px #1e1e1e;transform:scaleX(1.062)">To see the DOCX conversion in action, simply add this file to calibre using the</div>
<div class="t" style="left:181.6px;top:219.4px;font-size:11.6px;line-height:15.0px;color:#1e1e1e;-webkit-text-stroke:0.1px #1e1e1e;font-weight:bold;transform:scaleX(0.994)">“Add Books”</div>
<div class="t" style="left:257px;top:219.4px;font-size:11.6px;line-height:15.0px;color:#1e1e1e;-webkit-text-stroke:0.25px #1e1e1e;transform:scaleX(1.098)">button and then click “</div>
<div class="t" style="left:381.6px;top:219.4px;font-size:11.6px;line-height:15.0px;color:#1e1e1e;-webkit-text-stroke:0.1px #1e1e1e;font-weight:bold;transform:scaleX(1.050)">Convert”.</div>
<div class="t" style="left:443.2px;top:219.4px;font-size:11.6px;line-height:15.0px;color:#1e1e1e;-webkit-text-stroke:0.25px #1e1e1e;transform:scaleX(1.117)">Set the output format in the top right</div>
<div class="t" style="left:181.4px;top:235.4px;font-size:11.6px;line-height:15.0px;color:#1e1e1e;-webkit-text-stroke:0.25px #1e1e1e;transform:scaleX(1.060)">corner of the conversion dialog to EPUB or AZW3 and click</div>
<div class="t" style="left:505.9px;top:235.4px;font-size:11.6px;line-height:15.0px;color:#1e1e1e;-webkit-text-stroke:0.1px #1e1e1e;font-weight:bold;transform:scaleX(0.959)">“OK”</div>
<div class="t" style="left:533.7px;top:235.4px;font-size:11.6px;line-height:15.0px;color:#1e1e1e;-webkit-text-stroke:0.25px #1e1e1e;transform:scaleX(0.900)">.</div>
<svg class="r" style="left:0;top:0" width="832" height="569"><path d="M442.0 151.8 l1.2 0.9 l1.2 -0.9 l1.2 0.9 l1.2 -0.9 l1.2 0.9 l1.2 -0.9 l1.2 0.9 l1.2 -0.9 l1.2 0.9 l1.2 -0.9 l1.2 0.9 l1.2 -0.9 l1.2 0.9 l1.2 -0.9 l1.2 0.9 l1.2 -0.9 l1.2 0.9 l1.2 -0.9 l1.2 0.9 l1.2 -0.9 l1.2 0.9 l1.2 -0.9 l1.2 0.9 l1.2 -0.9 l1.2 0.9 l1.2 -0.9 l1.2 0.9 l1.2 -0.9" fill="none" stroke="#e02424" stroke-width="1.1"/></svg>
<svg class="r" style="left:0;top:0" width="832" height="569"><path d="M325.0 167.8 l1.2 0.9 l1.2 -0.9 l1.2 0.9 l1.2 -0.9 l1.2 0.9 l1.2 -0.9 l1.2 0.9 l1.2 -0.9 l1.2 0.9 l1.2 -0.9 l1.2 0.9 l1.2 -0.9 l1.2 0.9 l1.2 -0.9 l1.2 0.9 l1.2 -0.9 l1.2 0.9 l1.2 -0.9 l1.2 0.9 l1.2 -0.9 l1.2 0.9 l1.2 -0.9 l1.2 0.9 l1.2 -0.9 l1.2 0.9 l1.2 -0.9 l1.2 0.9 l1.2 -0.9" fill="none" stroke="#e02424" stroke-width="1.1"/></svg>
<svg class="r" style="left:0;top:0" width="832" height="569"><path d="M577.0 184.2 l1.2 0.9 l1.2 -0.9 l1.2 0.9 l1.2 -0.9 l1.2 0.9 l1.2 -0.9 l1.2 0.9 l1.2 -0.9 l1.2 0.9 l1.2 -0.9 l1.2 0.9 l1.2 -0.9 l1.2 0.9 l1.2 -0.9 l1.2 0.9 l1.2 -0.9 l1.2 0.9 l1.2 -0.9 l1.2 0.9 l1.2 -0.9 l1.2 0.9 l1.2 -0.9 l1.2 0.9 l1.2 -0.9" fill="none" stroke="#e02424" stroke-width="1.1"/></svg>
<svg class="r" style="left:0;top:0" width="832" height="569"><path d="M536.0 216.6 l1.2 0.9 l1.2 -0.9 l1.2 0.9 l1.2 -0.9 l1.2 0.9 l1.2 -0.9 l1.2 0.9 l1.2 -0.9 l1.2 0.9 l1.2 -0.9 l1.2 0.9 l1.2 -0.9 l1.2 0.9 l1.2 -0.9 l1.2 0.9 l1.2 -0.9 l1.2 0.9 l1.2 -0.9 l1.2 0.9 l1.2 -0.9 l1.2 0.9 l1.2 -0.9 l1.2 0.9 l1.2 -0.9 l1.2 0.9 l1.2 -0.9 l1.2 0.9 l1.2 -0.9 l1.2 0.9 l1.2 -0.9" fill="none" stroke="#e02424" stroke-width="1.1"/></svg>
<div class="r" style="left:0px;top:556px;width:832px;height:13px;background:#f3f2f1"></div>
<div class="t" style="left:6.3px;top:556.6px;font-size:9.12px;line-height:14px;color:#444;-webkit-text-stroke:0.2px #444;transform:scaleX(0.936);">Страница 1 из 8</div>
<div class="t" style="left:85.6px;top:556.6px;font-size:9.12px;line-height:14px;color:#444;-webkit-text-stroke:0.2px #444;transform:scaleX(0.911);">Число слов: 1639</div>
<svg class="r" style="left:167px;top:559px;" width="12" height="10" viewBox="0 0 12 10"><path d="M0.6 0.6h4.5l1 1 1-1H10v6" fill="none" stroke="#555" stroke-width="0.9"/><path d="M0.6 0.6v8h5" fill="none" stroke="#555" stroke-width="0.9"/><path d="M7 6l4 3.5M11 6l-4 3.5" stroke="#555" stroke-width="0.9"/></svg>
<div class="t" style="left:191.0px;top:556.6px;font-size:9.12px;line-height:14px;color:#444;-webkit-text-stroke:0.2px #444;transform:scaleX(0.947);">английский (США)</div>
<svg class="r" style="left:279px;top:558px;" width="12" height="11" viewBox="0 0 12 11"><rect x="0.6" y="0.6" width="10" height="8" fill="none" stroke="#555" stroke-width="0.9"/><path d="M0.6 2.5h10M2 4.5h3M2 6.5h3" stroke="#555" stroke-width="0.9"/><circle cx="8" cy="7.5" r="2.5" fill="#fff" stroke="#555" stroke-width="0.9"/><circle cx="8" cy="7.5" r="1" fill="#555"/></svg>
<svg class="r" style="left:518px;top:558px;" width="12" height="11" viewBox="0 0 12 11"><path d="M3.5 2h4l2 2v5.5h-6z" fill="none" stroke="#444" stroke-width="0.9"/><path d="M0.5 2.5V0.5h2.5M9 0.5h2.5v2M0.5 8v2.5H3M9 10.5h2.5V8" fill="none" stroke="#444" stroke-width="0.8"/></svg>
<div class="t" style="left:531.5px;top:556.6px;font-size:9.12px;line-height:14px;color:#444;-webkit-text-stroke:0.2px #444;transform:scaleX(0.960);">Фокусировка</div>
<svg class="r" style="left:603px;top:558px;" width="10" height="10" viewBox="0 0 10 10"><path d="M0.5 1h4l0.5 0.5 0.5-0.5h4v8h-4l-0.5 0.5-0.5-0.5h-4z" fill="none" stroke="#555" stroke-width="0.9"/><path d="M5 1.5v7.5" stroke="#555" stroke-width="0.8"/></svg>
<div class="r" style="left:624px;top:556px;width:30px;height:13px;background:#c8c6c4"></div>
<svg class="r" style="left:634px;top:557px;" width="10" height="11" viewBox="0 0 10 11"><rect x="0.6" y="0.6" width="8.5" height="10" fill="#fff" stroke="#555" stroke-width="1"/><path d="M2.5 3h5M2.5 5h5M2.5 7h5" stroke="#555" stroke-width="0.8"/></svg>
<svg class="r" style="left:664px;top:558px;" width="11" height="11" viewBox="0 0 11 11"><rect x="0.6" y="0.6" width="9" height="9" fill="none" stroke="#555" stroke-width="0.9"/><path d="M0.6 2.5h9M2 4.5h3M2 6.5h3" stroke="#555" stroke-width="0.9"/><circle cx="7.5" cy="7.5" r="2.8" fill="#555"/><path d="M7.5 6v3" stroke="#fff" stroke-width="0.9"/></svg>
<div class="r" style="left:689px;top:563px;width:6px;height:1px;background:#666"></div>
<div class="r" style="left:699px;top:563px;width:76px;height:1px;background:#9a9a9a"></div>
<div class="r" style="left:735.5px;top:560px;width:4px;height:8px;background:#555"></div>
<div class="r" style="left:779px;top:563px;width:6px;height:1px;background:#555"></div>
<div class="r" style="left:781.5px;top:560.5px;width:1px;height:6px;background:#555"></div>
<div class="t" style="left:795.3px;top:556.6px;font-size:9.12px;line-height:14px;color:#444;-webkit-text-stroke:0.2px #444;transform:scaleX(0.866);">100 %</div>
<div class="r" style="left:607.5px;top:119px;width:230px;height:71px;background:#fefefe;border-radius:2px;box-shadow:0 2px 6px rgba(0,0,0,0.22),0 0 1px rgba(0,0,0,0.25)"></div>
<svg class="r" style="left:617px;top:121px;" width="24" height="23" viewBox="0 0 24 23"><path d="M1.25 9.5V21.5H22.9V5.2H12.3" fill="none" stroke="#505050" stroke-width="1.2"/><path d="M12.3 5.2h10.6M12.3 8.7h10.6" stroke="#505050" stroke-width="1.1"/><rect x="12.3" y="5.8" width="10.6" height="2.3" fill="#b5b5b5"/><path d="M5.6 1.6v11M0.1 7.1h11" stroke="#2ea043" stroke-width="1.4"/></svg>
<div class="t" style="left:615.6px;top:148.5px;font-size:9.60px;line-height:14px;color:#474747;-webkit-text-stroke:0.2px #474747;transform:scaleX(0.941);">Новое</div>
<div class="t" style="left:618.5px;top:160.4px;font-size:9.60px;line-height:14px;color:#474747;-webkit-text-stroke:0.2px #474747;transform:scaleX(1.026);">окно</div>
<svg class="r" style="left:664px;top:123px;" width="23" height="23" viewBox="0 0 23 23"><rect x="0.9" y="1" width="21.1" height="21.4" rx="1" fill="#fafafa" stroke="#505050" stroke-width="1.2"/><rect x="0.9" y="1.6" width="21.1" height="3" fill="#b8b8b8"/><path d="M0.9 4.8h21.1M0.9 11.3h21.1M0.9 14.7h21.1" stroke="#505050" stroke-width="1.1"/><rect x="0.9" y="11.8" width="21.1" height="2.4" fill="#b8b8b8"/></svg>
<div class="t" style="left:648.3px;top:148.5px;font-size:9.60px;line-height:14px;color:#474747;-webkit-text-stroke:0.2px #474747;transform:scaleX(0.952);">Упорядочить</div>
<div class="t" style="left:668.5px;top:160.4px;font-size:9.60px;line-height:14px;color:#474747;-webkit-text-stroke:0.2px #474747;transform:scaleX(0.912);">все</div>
<div class="r" style="left:705px;top:117px;width:54px;height:61px;background:#c9c9c9;border-radius:7px"></div>
<svg class="r" style="left:721px;top:125px;" width="23" height="19" viewBox="0 0 23 19"><rect x="0.8" y="1.2" width="21.2" height="16.8" fill="#fff" stroke="#505050" stroke-width="1.2"/><path d="M0.8 4.1h21.2M0.8 10.4h21.2" stroke="#505050" stroke-width="1.1"/></svg>
<div class="t" style="left:720.3px;top:148.1px;font-size:9.60px;line-height:14px;color:#474747;-webkit-text-stroke:0.2px #474747;transform:scaleX(0.906);">Снять</div>
<div class="t" style="left:708.2px;top:160.6px;font-size:9.60px;line-height:14px;color:#474747;-webkit-text-stroke:0.2px #474747;transform:scaleX(0.908);">разделение</div>
<svg class="r" style="left:767px;top:125.5px;" width="14" height="8" viewBox="0 0 14 8"><path d="M0.6 1.1H4.6L6.4 2.9V7.4H0.6Z M6.4 1.1H10.6L12.6 3.1V7.4H6.4" fill="none" stroke="#b0b0b0" stroke-width="0.9"/><path d="M4.6 1.1V2.9H6.4M10.6 1.1V3.1H12.6" fill="none" stroke="#b0b0b0" stroke-width="0.8"/></svg>
<div class="t" style="left:781.9px;top:123.3px;font-size:9.60px;line-height:14px;color:#b0b0b0;-webkit-text-stroke:0.2px #b0b0b0;transform:scaleX(0.905);">Рядом</div>
<svg class="r" style="left:767px;top:142px;" width="13" height="12" viewBox="0 0 13 12"><path d="M1 2.5v7M1 2.5h1.5M1 9.5h1.5" stroke="#b0b0b0" fill="none" stroke-width="0.9"/><path d="M3.5 1h4l2 2v6.5h-6z" fill="none" stroke="#b0b0b0" stroke-width="0.9"/><path d="M11.5 0.5v11M10.3 2l1.2-1.5 1.2 1.5M10.3 10l1.2 1.5 1.2-1.5" fill="none" stroke="#b0b0b0" stroke-width="0.8"/></svg>
<div class="t" style="left:781.9px;top:141.2px;font-size:9.60px;line-height:14px;color:#b0b0b0;-webkit-text-stroke:0.2px #b0b0b0;transform:scaleX(0.924);">Синхронная прокрутка</div>
<svg class="r" style="left:767px;top:160px;" width="13" height="12" viewBox="0 0 13 12"><path d="M0.5 4.5h5l0.8 0.8 0.8-0.8h5.2v7H0.5z" fill="none" stroke="#b0b0b0" stroke-width="0.9"/><path d="M6.3 5v6.5" stroke="#b0b0b0" stroke-width="0.8"/><path d="M4 0.5L2 2l2 1.5M2 2h4" fill="none" stroke="#b0b0b0" stroke-width="0.8"/></svg>
<div class="t" style="left:781.9px;top:159.6px;font-size:9.60px;line-height:14px;color:#b0b0b0;-webkit-text-stroke:0.2px #b0b0b0;transform:scaleX(0.887);">Восстановить расположение</div>
<div class="t" style="left:795.7px;top:177.8px;font-size:9.60px;line-height:14px;color:#333;-webkit-text-stroke:0.2px #333;transform:scaleX(0.955);-webkit-text-stroke:0.35px #333;">Окно</div>
<div class="r" style="left:603px;top:37px;width:52px;height:70px;box-sizing:border-box;border:3px solid #0a0a0a;border-radius:8px;box-shadow:0 0 3px rgba(0,0,0,0.45),inset 0 0 3px rgba(0,0,0,0.3)"></div>
<div class="r" style="left:704.4px;top:115.8px;width:55px;height:63px;box-sizing:border-box;border:3px solid #0a0a0a;border-radius:8px;box-shadow:0 0 3px rgba(0,0,0,0.45),inset 0 0 3px rgba(0,0,0,0.3)"></div>
<svg class="r" style="left:0px;top:0px;" width="832" height="569" viewBox="0 0 832 569"><defs><filter id="sh" x="-20%" y="-20%" width="140%" height="140%"><feDropShadow dx="2" dy="1.5" stdDeviation="1.6" flood-color="#000" flood-opacity="0.35"/></filter></defs><g filter="url(#sh)" stroke="#050505" stroke-width="3.7" fill="none" stroke-linecap="round" stroke-linejoin="round"><path d="M709 179L598.5 333.3"/><path d="M599.8 320.3L598.3 333.5L610.4 328.2"/></g></svg>
<div class="r" style="left:576.3000000000001px;top:98.4px;width:39.6px;height:39.6px;border-radius:50%;background:rgba(38,38,38,0.9)"></div>
<div class="t" style="left:573.7px;top:99.0px;width:39.6px;height:39.6px;line-height:39.6px;text-align:center;font-size:38.5px;font-weight:bold;color:#fff;text-shadow:0 0 1.5px #000,0 0 1px #000">1</div>
<div class="r" style="left:744.3000000000001px;top:86.60000000000001px;width:39.6px;height:39.6px;border-radius:50%;background:rgba(38,38,38,0.9)"></div>
<div class="t" style="left:743.8000000000001px;top:86.60000000000001px;width:39.6px;height:39.6px;line-height:39.6px;text-align:center;font-size:38.5px;font-weight:bold;color:#fff;text-shadow:0 0 1.5px #000,0 0 1px #000">2</div>
</body></html>
